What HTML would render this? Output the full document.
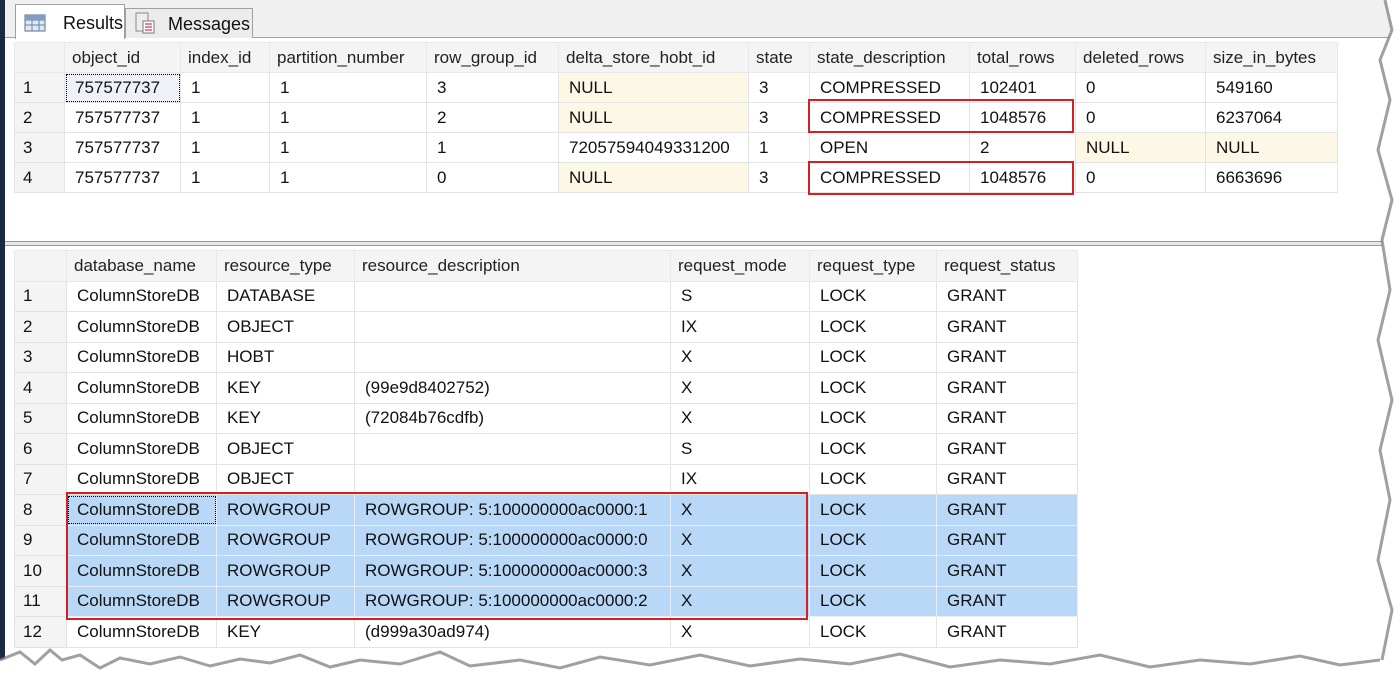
<!DOCTYPE html>
<html><head><meta charset="utf-8"><style>
*{margin:0;padding:0;box-sizing:border-box}
body{width:1400px;height:685px;background:#fff;position:relative;overflow:hidden;font-family:"Liberation Sans",sans-serif;font-size:17px;color:#111}
.navy{position:absolute;left:0;top:0;width:5px;height:660px;background:#1b2a44}
.tabbar{position:absolute;left:5px;top:0;width:1390px;height:38px;background:#f0f0f0;border-bottom:1px solid #a0a0a0}
.tab{position:absolute;top:4px;height:34px;border:1px solid #a0a0a0;border-bottom:none;background:#fff;font-size:18px}
table{position:absolute;border-collapse:collapse;table-layout:fixed}
td{border:1px solid #e3e3e3;height:30px;padding:0 0 0 10px;white-space:nowrap;overflow:hidden;vertical-align:middle}
#b td{height:30.5px}
tr.h td{background:#f4f4f4;color:#222;border-color:#e8e8e8;padding-left:7px}
td.n{background:#f4f4f4;padding-left:8px}
td.y{background:#fdf8e6}
tr.s td{background:#b9d7f7;border-color:#e6eefa}
tr.s td.n{background:#f4f4f4;border-color:#e3e3e3}
.red{position:absolute;border:2px solid #d42020}
.split{position:absolute;left:5px;top:241px;width:1390px;height:5px;background:#e8e8e8;border-top:1px solid #999;border-bottom:1px solid #999}
</style></head><body>
<div class="navy"></div>
<div class="tabbar">
<div class="tab" style="left:10px;width:110px;height:35px;background:#fff">
<svg width="22" height="18" style="position:absolute;left:8px;top:9px"><rect x="1" y="1" width="20" height="16" fill="#dfe8f4" stroke="#5a6f8e"/><path d="M1 6H21M1 11H21M8 1V17M15 1V17" stroke="#6a82a8"/><rect x="1" y="1" width="20" height="5" fill="#7f9cc4"/></svg>
<span style="position:absolute;left:47px;top:8px">Results</span></div>
<div class="tab" style="left:120px;width:128px;background:#ececec;top:8px;height:30px">
<svg width="22" height="22" style="position:absolute;left:8px;top:3px"><rect x="2" y="1" width="12" height="18" fill="#eee" stroke="#888"/><rect x="9" y="9" width="11" height="12" fill="#fff" stroke="#777"/><path d="M11 12h7M11 15h7M11 18h7" stroke="#c04"/></svg>
<span style="position:absolute;left:42px;top:5px">Messages</span></div>
</div>

<table style="left:14px;top:42px;width:1323px">
<colgroup><col style="width:50px"><col style="width:116px"><col style="width:89px"><col style="width:157px"><col style="width:132px"><col style="width:190px"><col style="width:61px"><col style="width:160px"><col style="width:106px"><col style="width:130px"><col style="width:132px"></colgroup>
<tr class="h"><td></td><td>object_id</td><td>index_id</td><td>partition_number</td><td>row_group_id</td><td>delta_store_hobt_id</td><td>state</td><td>state_description</td><td>total_rows</td><td>deleted_rows</td><td>size_in_bytes</td></tr>
<tr><td class="n">1</td><td style="outline:1px dotted #000;outline-offset:-2px;background:#eef2f8">757577737</td><td>1</td><td>1</td><td>3</td><td class="y">NULL</td><td>3</td><td>COMPRESSED</td><td>102401</td><td>0</td><td>549160</td></tr>
<tr><td class="n">2</td><td>757577737</td><td>1</td><td>1</td><td>2</td><td class="y">NULL</td><td>3</td><td>COMPRESSED</td><td>1048576</td><td>0</td><td>6237064</td></tr>
<tr><td class="n">3</td><td>757577737</td><td>1</td><td>1</td><td>1</td><td>72057594049331200</td><td>1</td><td>OPEN</td><td>2</td><td class="y">NULL</td><td class="y">NULL</td></tr>
<tr><td class="n">4</td><td>757577737</td><td>1</td><td>1</td><td>0</td><td class="y">NULL</td><td>3</td><td>COMPRESSED</td><td>1048576</td><td>0</td><td>6663696</td></tr>
</table>
<div class="red" style="left:808px;top:99px;width:266px;height:34px"></div>
<div class="red" style="left:808px;top:161px;width:266px;height:34px"></div>

<div class="split"></div>

<table id="b" style="left:14px;top:250px;width:1063px">
<colgroup><col style="width:52px"><col style="width:150px"><col style="width:138px"><col style="width:316px"><col style="width:139px"><col style="width:127px"><col style="width:141px"></colgroup>
<tr class="h"><td></td><td>database_name</td><td>resource_type</td><td>resource_description</td><td>request_mode</td><td>request_type</td><td>request_status</td></tr>
<tr><td class="n">1</td><td>ColumnStoreDB</td><td>DATABASE</td><td></td><td>S</td><td>LOCK</td><td>GRANT</td></tr>
<tr><td class="n">2</td><td>ColumnStoreDB</td><td>OBJECT</td><td></td><td>IX</td><td>LOCK</td><td>GRANT</td></tr>
<tr><td class="n">3</td><td>ColumnStoreDB</td><td>HOBT</td><td></td><td>X</td><td>LOCK</td><td>GRANT</td></tr>
<tr><td class="n">4</td><td>ColumnStoreDB</td><td>KEY</td><td>(99e9d8402752)</td><td>X</td><td>LOCK</td><td>GRANT</td></tr>
<tr><td class="n">5</td><td>ColumnStoreDB</td><td>KEY</td><td>(72084b76cdfb)</td><td>X</td><td>LOCK</td><td>GRANT</td></tr>
<tr><td class="n">6</td><td>ColumnStoreDB</td><td>OBJECT</td><td></td><td>S</td><td>LOCK</td><td>GRANT</td></tr>
<tr><td class="n">7</td><td>ColumnStoreDB</td><td>OBJECT</td><td></td><td>IX</td><td>LOCK</td><td>GRANT</td></tr>
<tr class="s"><td class="n">8</td><td style="outline:1px dotted #000;outline-offset:-2px">ColumnStoreDB</td><td>ROWGROUP</td><td>ROWGROUP: 5:100000000ac0000:1</td><td>X</td><td>LOCK</td><td>GRANT</td></tr>
<tr class="s"><td class="n">9</td><td>ColumnStoreDB</td><td>ROWGROUP</td><td>ROWGROUP: 5:100000000ac0000:0</td><td>X</td><td>LOCK</td><td>GRANT</td></tr>
<tr class="s"><td class="n">10</td><td>ColumnStoreDB</td><td>ROWGROUP</td><td>ROWGROUP: 5:100000000ac0000:3</td><td>X</td><td>LOCK</td><td>GRANT</td></tr>
<tr class="s"><td class="n">11</td><td>ColumnStoreDB</td><td>ROWGROUP</td><td>ROWGROUP: 5:100000000ac0000:2</td><td>X</td><td>LOCK</td><td>GRANT</td></tr>
<tr><td class="n">12</td><td>ColumnStoreDB</td><td>KEY</td><td>(d999a30ad974)</td><td>X</td><td>LOCK</td><td>GRANT</td></tr>
</table>
<div class="red" style="left:66px;top:492px;width:742px;height:128px"></div>

<svg width="1400" height="685" style="position:absolute;left:0;top:0">
<path d="M0 660 L20 652 L35 664 L50 650 L62 660 L80 655 L100 668 L120 658 L150 664 L180 657 L210 666 L240 659 L270 663 L300 655 L330 667 L360 660 L400 664 L440 652 L470 666 L520 660 L560 668 L600 657 L650 665 L700 655 L750 666 L800 659 L850 664 L900 654 L950 667 L1000 660 L1050 664 L1100 655 L1150 667 L1200 660 L1250 664 L1300 656 L1340 665 L1400 660 L1400 685 L0 685Z" fill="#fff"/>
<path d="M0 660 L20 652 L35 664 L50 650 L62 660 L80 655 L100 668 L120 658 L150 664 L180 657 L210 666 L240 659 L270 663 L300 655 L330 667 L360 660 L400 664 L440 652 L470 666 L520 660 L560 668 L600 657 L650 665 L700 655 L750 666 L800 659 L850 664 L900 654 L950 667 L1000 660 L1050 664 L1100 655 L1150 667 L1200 660 L1250 664 L1300 656 L1340 665 L1380 660" fill="none" stroke="#777" stroke-width="3" opacity="0.7"/>
<path d="M1385 0 L1392 30 L1380 60 L1390 100 L1378 150 L1392 200 L1382 240 L1390 290 L1378 340 L1392 400 L1380 450 L1390 500 L1378 560 L1392 610 L1382 660 L1400 685 L1400 0Z" fill="#fff"/>
<path d="M1385 0 L1392 30 L1380 60 L1390 100 L1378 150 L1392 200 L1382 240 L1390 290 L1378 340 L1392 400 L1380 450 L1390 500 L1378 560 L1392 610 L1382 660" fill="none" stroke="#777" stroke-width="3" opacity="0.7"/>
</svg>
</body></html>
